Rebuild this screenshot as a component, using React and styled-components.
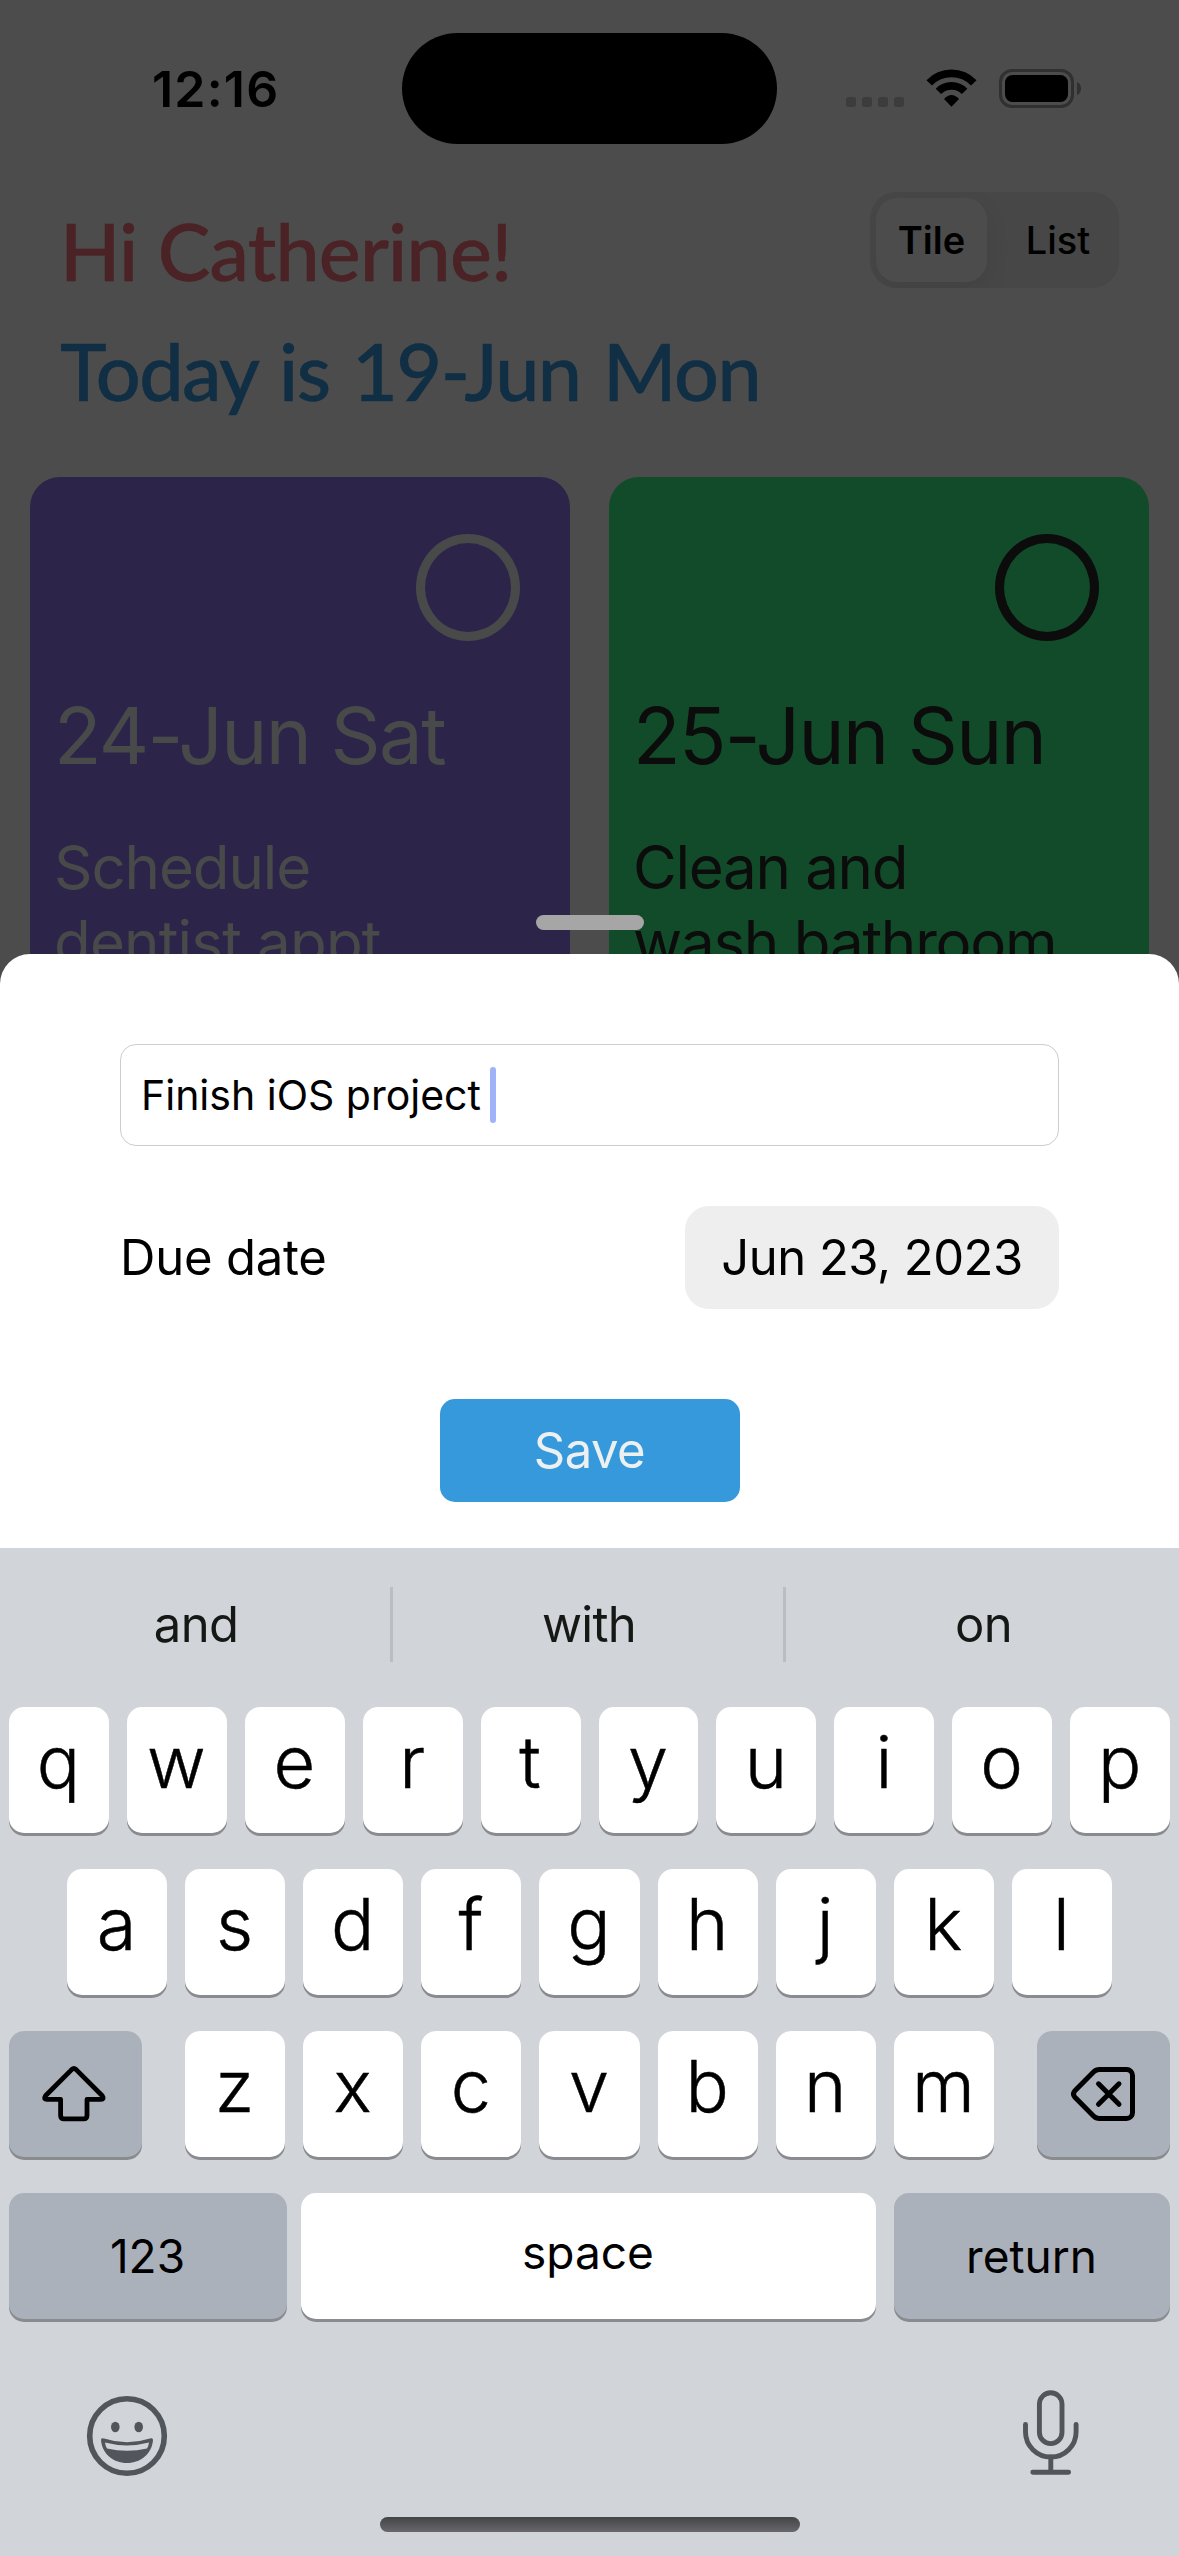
import React from 'react';
import styled, { createGlobalStyle } from 'styled-components';

const GlobalStyle = createGlobalStyle`
  * { box-sizing: border-box; }
  body { margin: 0; background: #4c4c4c; }
`;

const Phone = styled.div`
  width: 1179px;
  height: 2556px;
  overflow: hidden;
  display: flex;
  flex-direction: column;
  background: #4c4c4c;
  color: #000;
  font-family: Inter, "Liberation Sans", sans-serif;
  white-space: nowrap;
`;

const Home = styled.main`
  height: 984px;
  flex: none;
  overflow: hidden;
`;

const StatusBar = styled.header`
  display: grid;
  grid-template-columns: 402px 375px 402px;
  align-items: center;
  height: 177px;
`;

const Clock = styled.div`
  padding-left: 152px;
  font-size: 50px;
  font-weight: 600;
  line-height: 60px;
  letter-spacing: ${(p) => p.$tracking}px;
`;

const Island = styled.div`
  height: 111px;
  border-radius: 56px;
  background: #000;
`;

const StatusIcons = styled.div`
  display: flex;
  gap: 22px;
  padding-left: 69px;
`;

const TitleRow = styled.div`
  display: flex;
  justify-content: space-between;
  align-items: flex-start;
  height: 300px;
  padding: 14px 60px 0 60px;
`;

const Titles = styled.div`
  display: flex;
  flex-direction: column;
`;

const Title = styled.h1`
  margin: 0;
  font-family: Lato, "Liberation Sans", sans-serif;
  font-size: 79px;
  font-weight: 500;
  line-height: 120px;
  color: ${(p) => p.$color};
  letter-spacing: ${(p) => p.$tracking}px;
  word-spacing: ${(p) => p.$wordGap}px;
  -webkit-text-stroke: 0.5px ${(p) => p.$color};
`;

const Segmented = styled.div`
  display: flex;
  width: 249px;
  height: 96px;
  margin-top: 1px;
  padding: 6px;
  border-radius: 27px;
  overflow: hidden;
  background: #474747;
`;

const Segment = styled.div`
  display: flex;
  align-items: center;
  justify-content: center;
  width: ${(p) => (p.$selected ? 111 : 126)}px;
  padding-left: ${(p) => (p.$selected ? 0 : 16)}px;
  border-radius: 21px;
  font-size: 38px;
  font-weight: ${(p) => (p.$selected ? 570 : 450)};
  background: ${(p) => (p.$selected ? '#4c4c4c' : 'transparent')};
  box-shadow: ${(p) => (p.$selected ? '0 9px 24px rgba(0, 0, 0, 0.08)' : 'none')};
`;

const Cards = styled.section`
  display: grid;
  grid-template-columns: 540px 540px;
  gap: 39px;
  padding: 0 30px;
`;

const Card = styled.article`
  height: 540px;
  padding: 57px 24px 0;
  border-radius: 30px;
  background: ${(p) => p.$fill};
  color: ${(p) => p.$ink};
`;

const Check = styled.div`
  width: 104px;
  height: 107px;
  margin: 0 26px 47px auto;
  border: 9px solid currentColor;
  border-radius: 50%;
`;

const CardDate = styled.div`
  margin-bottom: 46px;
  font-size: 78px;
  line-height: 96px;
  letter-spacing: ${(p) => p.$tracking}px;
`;

const CardTask = styled.div`
  font-size: 60px;
  line-height: 75px;
  letter-spacing: ${(p) => p.$tracking}px;
`;

const Sheet = styled.section`
  position: relative;
  flex: none;
  height: 594px;
  margin-top: -30px;
  padding: 90px 120px 0;
  border-radius: 30px 30px 0 0;
  background: #fff;
`;

const Grabber = styled.div`
  position: absolute;
  top: -39px;
  left: 50%;
  width: 108px;
  height: 15px;
  margin-left: -54px;
  border-radius: 8px;
  background: #a6a6a6;
`;

const Field = styled.div`
  display: flex;
  align-items: center;
  height: 102px;
  padding-left: 20px;
  border: 1.5px solid #cdcdcd;
  border-radius: 16px;
  font-size: 41px;
  letter-spacing: ${(p) => p.$tracking}px;
`;

const Caret = styled.span`
  width: 6px;
  height: 56px;
  margin-left: 9px;
  border-radius: 3px;
  background: #a0b3fa;
`;

const DueRow = styled.div`
  display: flex;
  align-items: center;
  justify-content: space-between;
  height: 103px;
  margin-top: 60px;
  font-size: 49px;
  letter-spacing: ${(p) => p.$tracking}px;
`;

const DatePill = styled.div`
  display: flex;
  align-items: center;
  justify-content: center;
  width: 374px;
  height: 103px;
  border-radius: 24px;
  background: #eeeeef;
  letter-spacing: ${(p) => p.$tracking}px;
`;

const SaveButton = styled.button`
  display: block;
  width: 300px;
  height: 103px;
  margin: 90px auto 0;
  padding: 0;
  border: 0;
  border-radius: 15px;
  background: #3699dc;
  color: #ecf0f1;
  font-family: inherit;
  font-size: 49px;
  letter-spacing: ${(p) => p.$tracking}px;
`;

const Keyboard = styled.section`
  flex: none;
  height: 1008px;
  display: flex;
  flex-direction: column;
  background: #d1d4d9;
`;

const Suggestions = styled.div`
  display: grid;
  grid-template-columns: 390px 393px 396px;
  height: 75px;
  margin: 39px 0 45px;
`;

const Suggestion = styled.div`
  display: flex;
  align-items: center;
  justify-content: center;
  padding-left: 2px;
  font-size: 49px;
  color: #161816;
  letter-spacing: -0.7px;

  & + & { border-left: 3px solid #babec4; }
`;

const Keys = styled.div`
  display: flex;
  flex-direction: column;
  gap: 36px;
`;

const KeyRow = styled.div`
  display: flex;
  justify-content: ${(p) => (p.$spread ? 'space-between' : 'flex-start')};
  gap: ${(p) => (p.$spread ? 0 : 18)}px;
  height: 126px;
  padding: 0 ${(p) => p.$inset}px;
`;

const Letters = styled.div`
  display: flex;
  gap: 18px;
  width: 809px;
`;

const Key = styled.div`
  display: flex;
  align-items: center;
  justify-content: center;
  flex: ${(p) => (p.$width ? `0 0 ${p.$width}px` : '1 1 0')};
  min-width: 0;
  margin-right: ${(p) => p.$trail || 0}px;
  padding-right: 1px;
  padding-bottom: ${(p) => p.$lift || 0}px;
  border-radius: 15px;
  background: ${(p) => (p.$dark ? '#abb1bb' : '#fff')};
  box-shadow: 0 3px 0 #898b8f;
  font-size: ${(p) => p.$size || 72}px;
  font-weight: ${(p) => (p.$size ? 400 : 350)};
  -webkit-text-stroke: ${(p) => (p.$size ? 0 : 0.5)}px #000;
`;

const BottomBar = styled.div`
  display: flex;
  justify-content: space-between;
  height: 131px;
  margin-top: 67px;
  padding: 0 78px 0 77px;
`;

const MicWrap = styled.div`
  margin-top: -3px;
`;

const HomeIndicator = styled.div`
  width: 420px;
  height: 15px;
  margin: 0 auto;
  border-radius: 8px;
  background: linear-gradient(#424445, #68686d);
`;

const SignalDots = () => (
  <svg width="58" height="39" viewBox="0 0 58 39" fill="#3c3c3c">
    {[0, 16, 32, 48].map((x) => (
      <rect key={x} x={x} y="28" width="10" height="10" rx="3" />
    ))}
  </svg>
);

const Wifi = () => (
  <svg width="51" height="39" viewBox="0 -0.5 51 39" fill="none" stroke="#000" strokeWidth="7.6">
    <path d="M3.2 13.3A31 31 0 0 1 47.8 13.3" />
    <path d="M12.4 21.9A18.4 18.4 0 0 1 38.6 21.9" />
    <path d="M25.5 37.2L18 29.6Q25.5 21.4 33 29.6Z" fill="#000" stroke="none" />
  </svg>
);

const Battery = () => (
  <svg width="82" height="39" viewBox="0 0 82 39">
    <rect x="1.5" y="1.5" width="72" height="36" rx="11.5" fill="none" stroke="#303030" strokeWidth="3" />
    <rect x="6" y="6" width="63" height="27" rx="7.5" fill="#000" />
    <path d="M78 13C83.3 15 83.3 24 78 26Z" fill="#303030" />
  </svg>
);

const ShiftIcon = () => (
  <svg width="100" height="100" viewBox="0.3 0 100 100" fill="none" stroke="#000" strokeWidth="4.8" strokeLinejoin="round">
    <path d="M47.2 25.4Q49.2 23.6 51.2 25.4L77.6 51.8Q80 55.4 76 55.4H62.3V71.5Q62.3 74.9 58.9 74.9H39.3Q35.9 74.9 35.9 71.5V55.4H22.2Q18.4 55.4 20.8 51.8Z" />
  </svg>
);

const DeleteIcon = () => (
  <svg width="100" height="100" viewBox="0 0 100 100" fill="none" stroke="#000" strokeWidth="5" strokeLinecap="round">
    <path d="M46.5 25.5H73.5A6 6 0 0 1 79.5 31.5V68.5A6 6 0 0 1 73.5 74.5H46.5Q43 74.5 40.5 72L21.7 53Q19.2 50 21.7 47L40.5 28Q43 25.5 46.5 25.5Z" />
    <path d="M45.5 39.8L66 60.3M66 39.8L45.5 60.3" />
  </svg>
);

const EmojiIcon = () => (
  <svg width="100" height="100" viewBox="0 0 100 100" fill="#51565c">
    <circle cx="50" cy="50" r="37.3" fill="none" stroke="#51565c" strokeWidth="5.6" />
    <ellipse cx="38.3" cy="41" rx="4.3" ry="5.3" />
    <ellipse cx="61.7" cy="41" rx="4.3" ry="5.3" />
    <path d="M24 54Q24 51.6 27 52.6Q50 60 73 52.6Q76 51.6 76 54C75 67.5 64 77 50 77C36 77 25 67.5 24 54Z" />
    <path d="M28 56.6Q50 62.4 72 56.6Q71.6 60 70 62.5Q50 67 30 62.5Q28.4 60 28 56.6Z" fill="#d1d4d9" />
  </svg>
);

const MicIcon = () => (
  <svg width="100" height="100" viewBox="0 0 100 100" fill="none" stroke="#51565c" strokeWidth="4.9" strokeLinecap="round">
    <rect x="38.4" y="9.8" width="22.6" height="50.8" rx="11.3" />
    <path d="M24.5 41.5V49A25.3 25 0 0 0 75.1 49V41.5" />
    <path d="M49.8 74V89.3M31.8 89.3H67.6" />
  </svg>
);

const cards = [
  { date: '24-Jun Sat', lines: [['Schedule', -1.1], ['dentist appt', -0.8]], fill: '#2d244a', ink: '#484a4a' },
  { date: '25-Jun Sun', lines: [['Clean and', -1.3], ['wash bathroom', -1.2]], fill: '#124b29', ink: '#0b0c0b' },
];

const letterKeys = (letters) =>
  letters.split('').map((c) => (
    <Key key={c} $lift={17}>{c}</Key>
  ));

export default function App() {
  return (
    <>
      <GlobalStyle />
      <Phone>
        <Home>
          <StatusBar>
            <Clock $tracking={1.2}>12:16</Clock>
            <Island />
            <StatusIcons>
              <SignalDots />
              <Wifi />
              <Battery />
            </StatusIcons>
          </StatusBar>
          <TitleRow>
            <Titles>
              <Title $color="#4b2225" $tracking={-0.8} $wordGap={1}>Hi Catherine!</Title>
              <Title $color="#102e44" $tracking={-1.5} $wordGap={4}>Today is 19-Jun Mon</Title>
            </Titles>
            <Segmented>
              <Segment $selected>Tile</Segment>
              <Segment>List</Segment>
            </Segmented>
          </TitleRow>
          <Cards>
            {cards.map((card) => (
              <Card key={card.date} $fill={card.fill} $ink={card.ink}>
                <Check />
                <CardDate $tracking={-1.6}>{card.date}</CardDate>
                {card.lines.map(([text, tracking]) => (
                  <CardTask key={text} $tracking={tracking}>{text}</CardTask>
                ))}
              </Card>
            ))}
          </Cards>
        </Home>

        <Sheet>
          <Grabber />
          <Field $tracking={0}>
            Finish iOS project
            <Caret />
          </Field>
          <DueRow $tracking={-0.2}>
            <span>Due date</span>
            <DatePill $tracking={-0.5}>Jun 23, 2023</DatePill>
          </DueRow>
          <SaveButton $tracking={-0.5}>Save</SaveButton>
        </Sheet>

        <Keyboard>
          <Suggestions>
            <Suggestion>and</Suggestion>
            <Suggestion>with</Suggestion>
            <Suggestion>on</Suggestion>
          </Suggestions>
          <Keys>
            <KeyRow $inset={9}>{letterKeys('qwertyuiop')}</KeyRow>
            <KeyRow $inset={67}>{letterKeys('asdfghjkl')}</KeyRow>
            <KeyRow $inset={9} $spread>
              <Key $dark $width={133}><ShiftIcon /></Key>
              <Letters>{letterKeys('zxcvbnm')}</Letters>
              <Key $dark $width={133}><DeleteIcon /></Key>
            </KeyRow>
            <KeyRow $inset={9} $spread>
              <Key $dark $width={278} $size={46}>123</Key>
              <Key $width={575} $size={46} $lift={8} $trail={4}>space</Key>
              <Key $dark $width={276} $size={46}>return</Key>
            </KeyRow>
          </Keys>
          <BottomBar>
            <EmojiIcon />
            <MicWrap><MicIcon /></MicWrap>
          </BottomBar>
          <HomeIndicator />
        </Keyboard>
      </Phone>
    </>
  );
}
